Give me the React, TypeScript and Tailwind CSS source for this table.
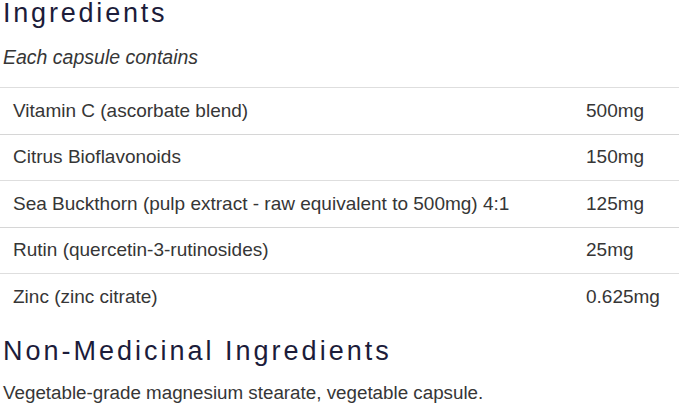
const rows = [
  { name: "Vitamin C (ascorbate blend)", amount: "500mg" },
  { name: "Citrus Bioflavonoids", amount: "150mg" },
  { name: "Sea Buckthorn (pulp extract - raw equivalent to 500mg) 4:1", amount: "125mg" },
  { name: "Rutin (quercetin-3-rutinosides)", amount: "25mg" },
  { name: "Zinc (zinc citrate)", amount: "0.625mg" },
];

export default function App() {
  return (
    <div className="w-[679px] h-[409px] overflow-hidden bg-white px-[3px] pt-[1px] font-['Liberation_Sans',Arial,sans-serif] text-[#363636]">
      <h2 className="text-[27px] leading-[25px] tracking-[2.8px] text-[#1c1c3a]">Ingredients</h2>
      <p className="mt-[22px] text-[19.5px] leading-[19.5px] italic">Each capsule contains</p>
      <div className="mt-[19.5px] -mx-[3px]">
        {rows.map((r, i) => (
          <div
            key={r.name}
            className={`flex items-center h-[46.5px] text-[19px] border-t ${i === 1 || i === 3 ? "border-[#d6d6d6]" : "border-[#dedede]"}`}
          >
            <span className="pl-[13px] w-[586px]">{r.name}</span>
            <span>{r.amount}</span>
          </div>
        ))}
      </div>
      <h2 className="mt-[18.5px] text-[27px] leading-[27px] tracking-[3px] text-[#1c1c3a]">Non-Medicinal Ingredients</h2>
      <p className="mt-[19px] text-[18.8px] leading-[18.8px]">Vegetable-grade magnesium stearate, vegetable capsule.</p>
    </div>
  );
}
